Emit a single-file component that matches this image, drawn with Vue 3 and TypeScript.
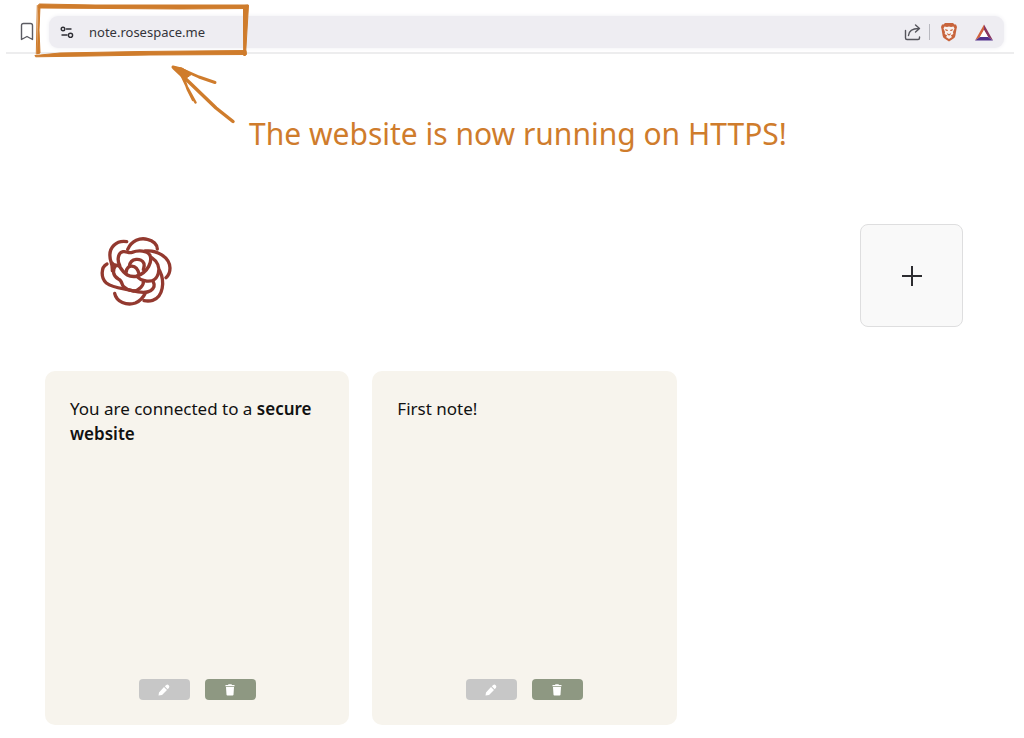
<script setup lang="ts">
import { ref } from 'vue'

interface Part { text: string; strong?: boolean }
interface Note { id: number; parts: Part[] }

const address = ref('note.rosespace.me')
const notes = ref<Note[]>([
  { id: 1, parts: [{ text: 'You are connected to a ' }, { text: 'secure website', strong: true }] },
  { id: 2, parts: [{ text: 'First note!' }] },
])

function addNote(): void {
  notes.value.push({ id: Date.now(), parts: [{ text: 'New note' }] })
}
function removeNote(id: number): void {
  notes.value = notes.value.filter((n) => n.id !== id)
}
</script>

<template>
  <div class="page">
    <header class="browser">
      <button class="bare" type="button" aria-label="Bookmark">
        <svg width="14" height="20" viewBox="0 0 14 20" fill="none" stroke="#5c5c63" stroke-width="1.4" stroke-linejoin="round">
          <path d="M1.5 3.5Q1.5 1.5 3.5 1.5H10.5Q12.5 1.5 12.5 3.5V17.5L7 14.5L1.5 17.5Z" />
        </svg>
      </button>
      <div class="bar">
        <button class="bare" type="button" aria-label="Site settings">
          <svg width="14" height="14" viewBox="0 0 14 14" fill="none" stroke="#2e2e34" stroke-width="1.4" stroke-linecap="round">
            <circle cx="3" cy="4" r="1.800" />
            <path d="M6.500 4H11M2 10H7" />
            <circle cx="10.500" cy="10.300" r="2.100" />
          </svg>
        </button>
        <input v-model="address" class="address" type="text" aria-label="Address" spellcheck="false" />
        <button class="bare" type="button" aria-label="Share">
          <svg width="18" height="18" viewBox="0 0 18 18" fill="none" stroke="#55555c" stroke-width="1.4" stroke-linecap="round" stroke-linejoin="round">
            <path d="M2.500 7.500V15Q2.500 16.500 4 16.500H15Q16.500 16.500 16.500 15V14" />
            <path d="M5.500 12.500C6 8 9 5.500 15.500 5.500M12.500 2L16.500 5.500L12.500 9" />
          </svg>
        </button>
        <span class="rule"></span>
        <button class="bare" type="button" aria-label="Shields">
          <svg width="18" height="20" viewBox="0 0 18 20">
            <path d="M5 1H13L14.500 2.500L16 2.500L17 5L16.500 7L15.300 14Q15 15.500 13.500 16.500L9 19.500L4.500 16.500Q3 15.500 2.700 14L1.500 7L1 5L2 2.500L3.500 2.500Z" fill="#c8643c" />
            <path d="M4.500 4.500L7 5L9 4.500L11 5L13.500 4.500L14.500 6.500L13 10L13.300 12L10.800 13.500L12 15L9 17L6 15L7.200 13.500L4.700 12L5 10L3.500 6.500Z" fill="#f8f1ee" />
            <path d="M5 7L8 8L7.500 9L5.800 8.700ZM13 7L10 8L10.500 9L12.200 8.700ZM7 11L9 12.300L11 11L10.300 13L9 13.600L7.700 13Z" fill="#c8643c" />
          </svg>
        </button>
        <button class="bare" type="button" aria-label="Rewards">
          <svg width="18" height="17" viewBox="0 0 18 17">
            <path d="M9 .500L0 16.500L5 13L9 6Z" fill="#d0633f" />
            <path d="M9 .500L18 16.500L13 13L9 6Z" fill="#8a3560" />
            <path d="M0 16.500H18L13 13H5Z" fill="#50308c" />
            <path d="M9 6L13 13H5Z" fill="#fff" />
          </svg>
        </button>
      </div>
      <svg class="marks" width="260" height="130" viewBox="0 0 260 130" fill="none" stroke="#cf7c2c" stroke-linecap="round" stroke-linejoin="round" aria-hidden="true">
        <path d="M39.500 4L95 5L248 5L247.500 8.500L180 9L110 8.500L39 8Z" fill="#cf7c2c" stroke-width="1" />
        <path d="M37.300 5.500L36.800 28L36.300 54" stroke-width="1" />
        <path d="M39 5L40 6L39 30L40 53L37.500 54L38 28Z" fill="#cf7c2c" stroke-width="1" />
        <path d="M35.300 55.500L60 53L140 51.500L246 50.500L246.500 54.500L150 55L90 56L36 56.800Z" fill="#cf7c2c" stroke-width="1" />
        <path d="M243.500 6L243.500 30L243.700 55.500L245.500 55.500L247 30L248.500 5.500Z" fill="#cf7c2c" stroke-width="1" />
        <path d="M174 68L190 83L216 108L233 121.500" stroke-width="3.500" />
        <path d="M173 67L181 69L199 77L215 82.500" stroke-width="3" />
        <path d="M179 70L187 87L195.500 102.500M181 71L188 90L193 100" stroke-width="2.500" />
        <path d="M173 67L182 68L192 74L185 79Z" fill="#cf7c2c" stroke-width="1" />
      </svg>
    </header>
    <p class="callout">The website is now running on HTTPS!</p>

    <main class="board">
      <div class="top">
        <svg class="rose" viewBox="0 0 285 285" fill="none" stroke="#93392f" stroke-width="10" stroke-linecap="round" stroke-linejoin="round" role="img" aria-label="Rose">
          <path d="M110 53C78 48 57 72 60 98C60 112 68 118 67 140" />
          <path d="M113 76C125 50 150 40 172 46C190 50 202 62 202 75" />
          <path d="M89 124C82 112 82 86 99 83C110 81 115 88 126 85C145 78 172 79 180 94C187 112 176 143 140 157" />
          <path d="M67 118C72 128 84 121 89 128C95 138 102 147 112 153C122 159 132 158 140 157" />
          <path d="M109 143C110 121 140 119 147 150" />
          <path d="M118 127C121 101 155 100 162 119C164 126 161 132 160 137" />
          <path d="M165 81C200 77 239 99 240 132C240 148 234 156 228 161" />
          <path d="M185 101C202 112 210 130 205 148C199 170 180 174 164 170C152 168 145 162 140 157" />
          <path d="M209 140C225 172 220 219 188 229C178 232 169 231 162 230" />
          <path d="M51 120C31 130 33 163 49 177C72 194 103 193 126 200C153 207 184 210 192 188C194 180 191 176 189 172" />
          <path d="M78 124C66 136 68 155 85 165C98 170 93 180 101 188C109 196 117 199 126 200" />
          <path d="M160 170C163 183 147 201 130 201" />
          <path d="M74 208C79 233 110 246 136 237C155 229 162 216 166 207" />
        </svg>
        <button class="add" type="button" aria-label="Add note" @click="addNote">
          <svg width="22" height="22" viewBox="0 0 22 22" stroke="#2c2c30" stroke-width="2"><path d="M1 11H21M11 1V21" /></svg>
        </button>
      </div>
      <section class="notes">
        <article v-for="note in notes" :key="note.id" class="note">
          <p class="text">
            <template v-for="(part, i) in note.parts" :key="i"><strong v-if="part.strong">{{ part.text }}</strong><template v-else>{{ part.text }}</template></template>
          </p>
          <div class="actions">
            <button class="action edit" type="button" aria-label="Edit note">
              <svg width="12" height="12" viewBox="0 0 12 12" fill="#fff">
                <path d="M.500 11.500L1 8.500L6 3L9 6L4 11ZM6.800 2.300L8.300 .900Q9.500 .100 10.700 1.200Q11.900 2.500 11 3.700L9.700 5.200Z" />
              </svg>
            </button>
            <button class="action delete" type="button" aria-label="Delete note" @click="removeNote(note.id)">
              <svg width="10" height="12" viewBox="0 0 10 12" fill="#fff">
                <path d="M.500 1H3L3.500 .300H6.500L7 1H9.500V2.300H.500ZM1 3H9L8.500 10.700Q8.400 11.500 7.600 11.500H2.400Q1.600 11.500 1.500 10.700Z" />
              </svg>
            </button>
          </div>
        </article>
      </section>
    </main>
  </div>
</template>

<style>
body { margin: 0; background: #fff; }
</style>

<style scoped>
.page { color: #111; font-family: "Noto Sans", sans-serif; }
button { cursor: pointer; }
.browser {
  position: relative;
  display: flex;
  align-items: center;
  gap: 15px;
  margin: 0 10px 0 6px;
  padding: 16px 10px 4px 14px;
  border-bottom: 2px solid #ededee;
}
.bare { display: flex; padding: 0; border: 0; background: none; }
.bar {
  flex: 1;
  display: flex;
  align-items: center;
  height: 32px;
  padding: 0 11px;
  border-radius: 9px;
  background: #eeedf2;
  box-shadow: 0 0 4px #eeedf2;
}
.address {
  flex: 1;
  min-width: 0;
  margin-left: 15px;
  padding: 0;
  border: 0;
  outline: 0;
  background: none;
  color: #34343a;
  font: 13px/20px "Noto Sans", sans-serif;
}
.rule { width: 1px; height: 16px; margin: 0 10px 0 8px; background: #b9b9c0; }
.rule + .bare { margin-right: 17px; }
.marks { position: absolute; top: 0; left: -6px; pointer-events: none; }
.callout {
  margin: 60px 24px 0 249px;
  color: #cf7c2c;
  font: 30px/40px "Virgil", "Segoe Print", "Noto Sans", cursive;
}
.board { padding: 70px 20px 13px 45px; }
.top { display: flex; align-items: flex-start; justify-content: space-between; padding: 0 41px 0 45px; }
.rose { width: 95px; height: 95px; }
.add {
  display: flex;
  align-items: center;
  justify-content: center;
  width: 103px;
  height: 103px;
  padding: 0;
  border: 1px solid #dededf;
  border-radius: 8px;
  background: #f9f9f9;
}
.notes { display: grid; grid-template-columns: repeat(3, 1fr); gap: 23px; margin-top: 44px; }
.note {
  display: flex;
  flex-direction: column;
  justify-content: space-between;
  min-height: 354px;
  box-sizing: border-box;
  padding: 25px;
  border-radius: 10px;
  background: #f7f4ed;
}
.text { margin: 0; font-size: 17px; line-height: 25px; }
.text strong { font-weight: 600; }
.actions { display: flex; justify-content: center; gap: 15px; }
.action {
  display: flex;
  align-items: center;
  justify-content: center;
  width: 51px;
  height: 21px;
  padding: 0;
  border: 0;
  border-radius: 4px;
}
.edit { background: #c7c7c7; }
.delete { background: #8e9882; }
</style>
